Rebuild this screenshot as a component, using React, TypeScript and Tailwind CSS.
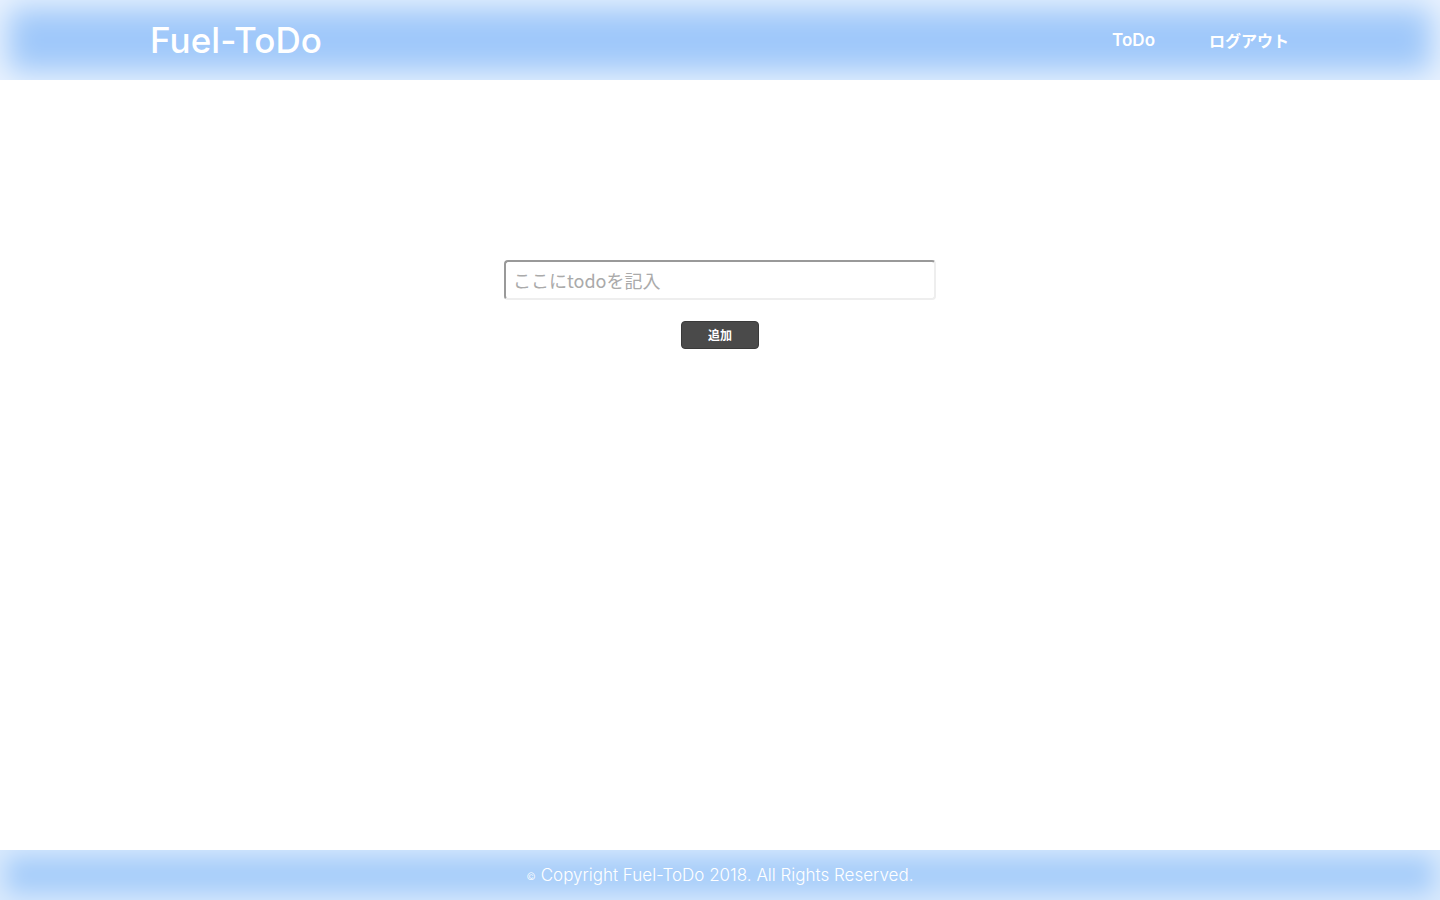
import React, { useState } from "react";

const App: React.FC = () => {
  const [todo, setTodo] = useState("");

  return (
    <div className="min-h-screen flex flex-col bg-white font-['Inter','Noto_Sans_CJK_JP',sans-serif]">
      <header className="h-[80px] bg-[#9fc8fa] shadow-[inset_0_0_30px_8px_rgba(255,255,255,0.8)] flex items-center justify-between pl-[150px] pr-[151px]">
        <h1 className="text-[35px] font-medium text-white tracking-[0.1px] leading-none">Fuel-ToDo</h1>
        <nav className="flex items-center gap-[54px] text-white">
          <a href="#" className="hover:opacity-80 text-[17px] font-semibold leading-none">ToDo</a>
          <a href="#" className="hover:opacity-80 text-[16px] font-bold leading-none font-['Noto_Sans_CJK_JP',sans-serif]">ログアウト</a>
        </nav>
      </header>

      <main className="flex-1 flex flex-col items-center pt-[180px]">
        <input
          type="text"
          value={todo}
          onChange={(e) => setTodo(e.target.value)}
          placeholder="ここにtodoを記入"
          className="w-[432px] h-[40px] px-[7px] text-[18px] rounded-[4px] border-2 border-t-[#999] border-l-[#999] border-r-[#eee] border-b-[#eee] placeholder:text-[#aaa] text-gray-700 font-['Noto_Sans_CJK_JP',sans-serif] outline-none"
        />
        <button className="mt-[21px] w-[78px] h-[28px] rounded-[4px] bg-[#4a4a4a] border border-[#3a3a3a] text-white text-[12px] font-bold font-['Noto_Sans_CJK_JP',sans-serif]">
          追加
        </button>
      </main>

      <footer className="h-[50px] bg-[#a6cdfa] shadow-[inset_0_0_24px_6px_rgba(255,255,255,0.6)] flex items-center justify-center text-white text-[17px] font-light pt-[2px]">
        <span className="text-[10px] mr-[5px]">©</span>
        Copyright Fuel-ToDo 2018. All Rights Reserved.
      </footer>
    </div>
  );
};

export default App;
